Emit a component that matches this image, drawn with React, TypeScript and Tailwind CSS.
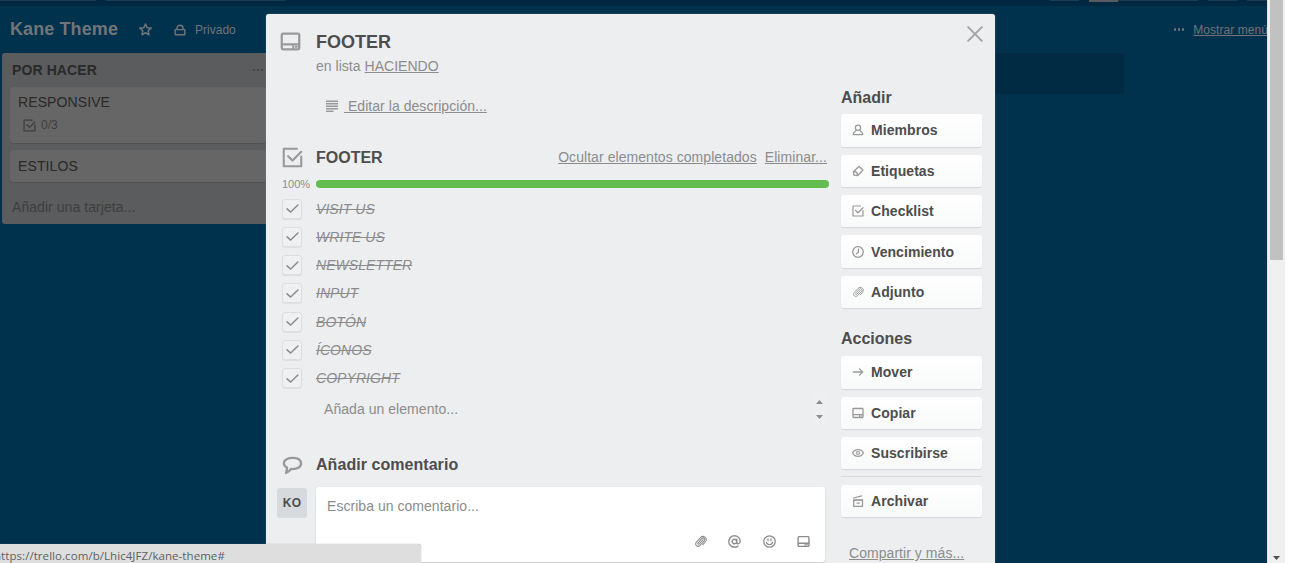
import type { ReactNode } from "react";

type IconProps = { className?: string };

function Svg({ className = "", box = 24, w = 2, children }: IconProps & { box?: number; w?: number; children: ReactNode }) {
  return (
    <svg
      className={`block shrink-0 ${className}`}
      viewBox={`0 0 ${box} ${box}`}
      fill="none"
      stroke="currentColor"
      strokeWidth={w}
      strokeLinecap="round"
      strokeLinejoin="round"
    >
      {children}
    </svg>
  );
}

const CardIcon = ({ className }: IconProps) => (
  <Svg className={className} w={2.6}>
    <rect x="2" y="3" width="20" height="18" rx="1.5" />
    <path d="M2.5 15.2H21.5" />
    <path d="M15 16V20M17.5 18H19.5" strokeWidth={2} />
  </Svg>
);
const CheckIcon = ({ className }: IconProps) => (
  <Svg className={className} w={2.4}>
    <path d="M17 2H2V22H22V11" />
    <path d="M7 10.5L12 15.5L22 5.5" />
  </Svg>
);
const TickIcon = ({ className }: IconProps) => (
  <Svg className={className} box={12} w={1.4}>
    <path d="M1 6.3L4.3 9.3L11 2.8" />
  </Svg>
);
const MemberIcon = ({ className }: IconProps) => (
  <Svg className={className} box={12} w={1.25}>
    <circle cx="6" cy="3.8" r="2.6" />
    <path d="M4.3 6.3L3.2 7.3C1.7 7.9 1.2 8.6 1.2 10.5H10.8C10.8 8.6 10.3 7.9 8.8 7.3L7.7 6.3" />
  </Svg>
);
const LabelIcon = ({ className }: IconProps) => (
  <Svg className={className} box={12} w={1.3}>
    <path d="M6.9 1.5L11 5L5.7 10.5L2 10.2L1.4 6.7Z" />
    <path d="M1.6 6.8C3 5.8 5.6 7.5 5.6 10.2" />
  </Svg>
);
const ClockIcon = ({ className }: IconProps) => (
  <Svg className={className} box={12} w={1.25}>
    <circle cx="6" cy="6" r="5.3" />
    <path d="M6.4 2.8V6.2L4.4 7.8" />
  </Svg>
);
const ClipIcon = ({ className }: IconProps) => (
  <Svg className={className} box={12} w={0.95}>
    <path d="M8.4 4.3L5 8.1C4.2 9 3.1 8.1 3.8 7.2L7.2 3.3C8.9 1.7 10.9 3.6 9.4 5.4L5.8 9.4C3.6 11.8 .2 9.4 2.2 6.6L6 2.4C8.4-.2 13 2.7 10.7 6L8.2 8.9" />
  </Svg>
);
const ArrowIcon = ({ className }: IconProps) => (
  <Svg className={className} box={12} w={1.3}>
    <path d="M1.3 6H10.7M7.5 2.9L10.7 6L7.5 9.1" />
  </Svg>
);
const EyeIcon = ({ className }: IconProps) => (
  <Svg className={className} box={12} w={1.2}>
    <path d="M.6 6C2.5 1.6 9.5 1.6 11.4 6C9.5 10.4 2.5 10.4 .6 6Z" />
    <circle cx="6" cy="6" r="1.5" />
  </Svg>
);
const ArchiveIcon = ({ className }: IconProps) => (
  <Svg className={className} box={12} w={1.25}>
    <rect x="1.7" y="4.9" width="8.8" height="6.5" />
    <path d="M1.5 3L9.8 .8M1.7 5.2H10.5M5 8H7.4" />
  </Svg>
);
const CommentIcon = ({ className }: IconProps) => (
  <Svg className={className} w={2.7}>
    <path d="M13 3.3C7 3 2 5.5 2.2 9.5C2.3 11.7 3.6 13.4 5.6 14.4C6 16.8 5.2 18.3 4.6 20.3C7.2 19.6 8.8 18.4 10.2 16C17 16.6 22 14 21.8 9.3C21.6 5.7 18 3.5 13 3.3Z" />
  </Svg>
);
const AtIcon = ({ className }: IconProps) => (
  <Svg className={className} box={12} w={1.25}>
    <circle cx="5.9" cy="6" r="2.1" />
    <path d="M8 3.8V7C8 8.7 11.3 8.4 11.3 5.8C11.3 3 9 .7 6 .7S.7 3 .7 6S3 11.3 6 11.3C7.2 11.3 8.3 11 9.2 10.3" />
  </Svg>
);
const SmileIcon = ({ className }: IconProps) => (
  <Svg className={className} box={12} w={1.15}>
    <circle cx="6" cy="6" r="5.3" />
    <path d="M4.6 3.5V5.2M7.4 3.5V5.2M3.2 6.8C3.8 9.5 8.2 9.5 8.8 6.8" />
  </Svg>
);
const StarIcon = ({ className }: IconProps) => (
  <Svg className={className} box={12} w={1.4}>
    <path d="M6 .9L7.5 4.3L11.2 4.7L8.5 7.2L9.2 10.9L6 9L2.8 10.9L3.5 7.2L.8 4.7L4.5 4.3Z" />
  </Svg>
);
const LockIcon = ({ className }: IconProps) => (
  <Svg className={className} box={12} w={1.4}>
    <path d="M1.2 5.6H10.8V10.8H1.2ZM3 5.3V4C3 .3 9 .3 9 4V5.3" />
  </Svg>
);

function Dots() {
  return (
    <span className="flex gap-[1.5px]">
      <i className="size-[2.5px] rounded-full bg-current" />
      <i className="size-[2.5px] rounded-full bg-current" />
      <i className="size-[2.5px] rounded-full bg-current" />
    </span>
  );
}

function SideButton({ icon, label }: { icon: ReactNode; label: string }) {
  return (
    <button className="flex h-[32.4px] w-[141px] shrink-0 items-center gap-[7px] rounded-[3px] bg-linear-to-b from-white to-[#f8f9f9] pl-[11px] text-sm font-bold text-[#4d4d4d] shadow-[0_1px_1px_#d3d7d9]">
      <span className="text-[#999]">{icon}</span>
      <span className="tracking-[0.06px]">{label}</span>
    </button>
  );
}

const items = ["VISIT US", "WRITE US", "NEWSLETTER", "INPUT", "BOTÓN", "ÍCONOS", "COPYRIGHT"];

function Board() {
  return (
    <div className="flex h-full w-[1267px] shrink-0 flex-col overflow-hidden bg-[#00314d]">
      <div className="flex h-[6px] shrink-0 items-start bg-[#002840]">
        <i className="h-px w-24 bg-[#1b3c50]" />
        <i className="ml-[10px] h-px w-[180px] bg-[#1b3c50]" />
        <i className="ml-[765px] h-px w-[29px] bg-[#1b3c50]" />
        <i className="ml-[10px] h-[2px] w-[29px] bg-[#565b5d]" />
        <i className="h-px w-20 bg-[#1b3c50]" />
        <i className="ml-[10px] h-px w-[29px] bg-[#1b3c50]" />
        <i className="ml-[10px] h-px w-5 bg-[#1b3c50]" />
      </div>
      <div className="flex h-[47px] shrink-0 items-center whitespace-nowrap pl-[10px] text-[#717578]">
        <span className="text-[18px] font-bold tracking-[0.1px]">Kane Theme</span>
        <StarIcon className="ml-[21px] size-[13px]" />
        <LockIcon className="ml-[22px] size-[12px]" />
        <span className="ml-[9px] text-xs">Privado</span>
        <span className="ml-auto"><Dots /></span>
        <span className="ml-[9px] mr-[-1px] text-xs tracking-[0.06px] underline">Mostrar menú</span>
      </div>
      <div className="flex items-start">
        <div className="ml-[2px] flex h-[171px] w-[272px] shrink-0 flex-col rounded-[3px] bg-[#5b5c5e] px-2">
          <div className="flex h-[34px] items-center pl-[2px] text-[#292929]">
            <span className="text-sm font-bold tracking-[0.1px]">POR HACER</span>
            <span className="ml-auto mr-[3px] text-[#3d3d3d]"><Dots /></span>
          </div>
          <div className="h-[56px] rounded-[3px] bg-[#666] pl-2 shadow-[0_1px_1px_#505153]">
            <div className="h-[31px] text-sm leading-[31px] tracking-[0.1px] text-[#292929]">RESPONSIVE</div>
            <div className="flex items-center gap-[5px] pl-[5px] text-[#3f3f3f]">
              <CheckIcon className="size-[13px]" />
              <span className="text-xs leading-[14px]">0/3</span>
            </div>
          </div>
          <div className="mt-[7px] h-[32px] rounded-[3px] bg-[#666] pl-2 text-sm leading-[32px] tracking-[0.1px] text-[#292929] shadow-[0_1px_1px_#505153]">ESTILOS</div>
          <div className="pl-[2px] pt-[15px] text-sm leading-5 tracking-[0.06px] text-[#3e3e3e]">Añadir una tarjeta...</div>
        </div>
        <div className="ml-[580px] h-[41px] w-[270px] rounded-[3px] bg-[#002b43]" />
      </div>
    </div>
  );
}

function MainColumn() {
  return (
    <div className="flex w-[563px] shrink-0 flex-col text-[#8c8c8c]">
      <div className="flex pl-[14px] pt-[15px]">
        <CardIcon className="mt-[2px] size-[21px] text-[#999]" />
        <div className="ml-[15px]">
          <div className="text-[18px] font-bold leading-[26px] text-[#4d4d4d]">FOOTER</div>
          <div className="text-sm leading-[22px] tracking-[0.03px]">en lista <span className="underline">HACIENDO</span></div>
        </div>
      </div>
      <div className="mt-[19px] flex h-5 items-center pl-[60px]">
        <svg className="size-[12px]" viewBox="0 0 12 12" fill="#999">
          <path d="M0 .5H12V2H0ZM0 3H12V4.5H0ZM0 5.5H12V7H0ZM0 8H12V9.5H0ZM0 10.5H7.5V12H0Z" />
        </svg>
        <span className="ml-[6px] whitespace-pre text-sm tracking-[0.05px] underline"> Editar la descripción...</span>
      </div>
      <div className="mt-[30px] flex h-[22px] items-center pl-[16px]">
        <CheckIcon className="size-[21px] text-[#999]" />
        <span className="ml-[13px] pt-px text-base font-bold text-[#4d4d4d]">FOOTER</span>
        <span className="ml-auto text-sm tracking-[0.06px] underline">Ocultar elementos completados</span>
        <span className="ml-[8px] mr-[2px] text-sm tracking-[0.07px] underline">Eliminar...</span>
      </div>
      <div className="mt-[8px] flex h-4 items-center">
        <span className="w-[50px] pl-4 text-[11px]">100%</span>
        <div className="h-[8px] w-[513px] rounded-full bg-[#61bd4f]" />
      </div>
      <div className="mt-[2.4px] flex flex-col">
        {items.map((item) => (
          <div key={item} className="flex h-[28.25px] items-center pl-4">
            <span className="flex size-[20px] items-center justify-center rounded-[3px] border border-[#dcdfe1] bg-[#eff0f1] text-[#8c8c8c] shadow-[0_1px_1px_#dcdfe1]">
              <TickIcon className="size-[13px]" />
            </span>
            <span className="ml-[14px] text-sm italic tracking-[0.06px] line-through">{item}</span>
          </div>
        ))}
      </div>
      <div className="flex h-[34px] items-center pl-[58px] pr-[2px]">
        <span className="text-sm tracking-[0.05px]">Añada un elemento...</span>
        <div className="ml-auto flex h-[32px] w-[16px] flex-col items-center justify-center gap-[11px] bg-[#efefef]">
          <svg className="h-1 w-[7px]" viewBox="0 0 7 4"><path d="M0 4L3.5 0L7 4Z" fill="#8c8c8c" /></svg>
          <svg className="h-1 w-[7px]" viewBox="0 0 7 4"><path d="M0 0L3.5 4L7 0Z" fill="#8c8c8c" /></svg>
        </div>
      </div>
      <div className="mt-[27px] flex h-6 items-center pl-4">
        <CommentIcon className="size-[21px] text-[#999]" />
        <span className="ml-[13px] text-base font-bold tracking-[0.05px] text-[#4d4d4d]">Añadir comentario</span>
      </div>
      <div className="mt-[10px] flex items-start pl-[11px]">
        <div className="mt-[1px] flex size-[30px] items-center justify-center rounded-[3px] bg-[#d6dadc] text-xs font-bold tracking-[0.2px] text-[#4d4d4d]">KO</div>
        <div className="ml-[9px] flex h-[75px] w-[509px] flex-col rounded-[3px] bg-white shadow-[0_1px_2px_#c8cbcd]">
          <span className="pl-[11px] pt-[9px] text-sm leading-5 tracking-[0.04px]">Escriba un comentario...</span>
          <div className="mt-[18px] flex h-[14px] items-center gap-[21.3px] pl-[378px] text-[#8c8c8c]">
            <ClipIcon className="size-[13px]" />
            <AtIcon className="size-[13px]" />
            <SmileIcon className="size-[13px]" />
            <CardIcon className="size-[13px]" />
          </div>
        </div>
      </div>
    </div>
  );
}

function Sidebar() {
  return (
    <div className="ml-[12px] flex w-[141px] flex-col">
      <div className="flex h-[51px] shrink-0 justify-end pt-[12px] text-[#a3a3a3]">
        <Svg className="size-[16px] translate-x-px" box={16} w={1.9}><path d="M1.2 1.2L14.8 14.8M14.8 1.2L1.2 14.8" /></Svg>
      </div>
      <h3 className="mt-[22px] text-base font-bold leading-[22px] text-[#4d4d4d]">Añadir</h3>
      <div className="mt-[5.3px] flex flex-col gap-[8px]">
        <SideButton icon={<MemberIcon className="size-[12px]" />} label="Miembros" />
        <SideButton icon={<LabelIcon className="size-[12px]" />} label="Etiquetas" />
        <SideButton icon={<CheckIcon className="size-[12px]" />} label="Checklist" />
        <SideButton icon={<ClockIcon className="size-[12px]" />} label="Vencimiento" />
        <SideButton icon={<ClipIcon className="size-[12px]" />} label="Adjunto" />
      </div>
      <h3 className="mt-[20px] text-base font-bold leading-[22px] text-[#4d4d4d]">Acciones</h3>
      <div className="mt-[6px] flex flex-col gap-[8px]">
        <SideButton icon={<ArrowIcon className="size-[12px]" />} label="Mover" />
        <SideButton icon={<CardIcon className="size-[12px]" />} label="Copiar" />
        <SideButton icon={<EyeIcon className="size-[12px]" />} label="Suscribirse" />
      </div>
      <div className="mb-[7.4px] mt-[7px] h-px shrink-0 bg-[#d6dadc]" />
      <SideButton icon={<ArchiveIcon className="size-[12px]" />} label="Archivar" />
      <span className="mt-[26px] pl-[8px] text-sm leading-5 tracking-[0.05px] text-[#8c8c8c] underline">Compartir y más...</span>
    </div>
  );
}

export default function App() {
  return (
    <div className="relative flex h-[563px] w-[1293px] overflow-hidden bg-white font-['Liberation_Sans',Arial,sans-serif]">
      <Board />
      <div className="flex h-full w-[18px] flex-col items-center border-l border-[#dce4e8] bg-[#f0f0f0]">
        <div className="h-[260px] w-[13px] bg-[#c1c1c1]" />
        <svg className="mb-[3px] mt-auto h-1 w-[7px]" viewBox="0 0 7 4"><path d="M0 0L3.5 4L7 0Z" fill="#505050" /></svg>
      </div>
      <div className="absolute left-[266px] top-[14px] flex h-[560px] w-[729px] rounded-t-[3px] bg-[#edeef0] shadow-[0_0_1px_#a9bdca]">
        <MainColumn />
        <Sidebar />
      </div>
      <div className="absolute bottom-0 left-0 flex h-[19px] w-[421px] items-center overflow-hidden rounded-tr-[3px] bg-[#dedede] shadow-[0_0_1px_#888]">
        <span className="-ml-[6px] mt-[4px] whitespace-nowrap font-['Open_Sans','Noto_Sans',sans-serif] text-[11.5px] tracking-[0.06px] text-[#606060]">https://trello.com/b/Lhic4JFZ/kane-theme#</span>
      </div>
    </div>
  );
}
